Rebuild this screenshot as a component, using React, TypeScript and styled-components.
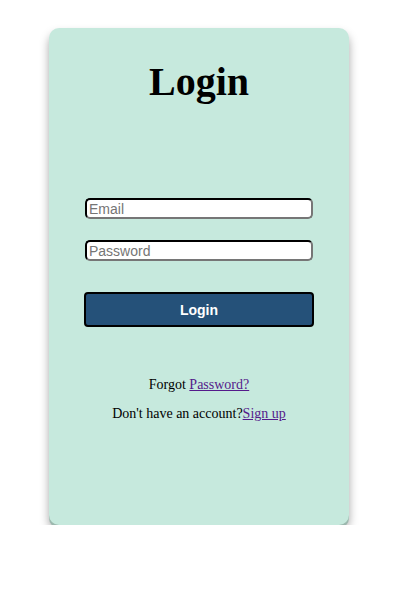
import {styled, createGlobalStyle} from "styled-components";

const GlobalStyle = createGlobalStyle`
    html, body {
        margin: 0;
        padding: 0;
        background: #ffffff;
    }
`

const Page = styled.div`
    padding: 28px 0 0 49px;
`

const Card = styled.div`
    box-sizing: border-box;
    width: 300px;
    height: 497px;
    background: #c6e9dd;
    border-radius: 10px;
    box-shadow: 0 3px 0 #9cb8ae, 0 6px 10px rgba(0, 0, 0, 0.35);
    padding-top: 31px;
    display: flex;
    flex-direction: column;
    align-items: center;
    font-family: "Liberation Serif", "Times New Roman", serif;
`

const Heading = styled.h1`
    margin: 0;
    font-size: 40px;
    line-height: 46px;
    font-weight: bold;
    color: #000;
`

const Form = styled.form`
    margin-top: 93px;
    display: flex;
    flex-direction: column;
    align-items: center;
`

const Input = styled.input<{ $gap?: number }>`
    box-sizing: border-box;
    width: 228px;
    height: 21px;
    margin-bottom: ${p => p.$gap ?? 0}px;
    padding: 0 2px;
    border: 2px inset #767676;
    border-top-color: #1a1a1a;
    border-left-color: #1a1a1a;
    border-radius: 5px;
    background: #fff;
    font-family: "Liberation Sans", Arial, sans-serif;
    font-size: 14px;
    outline: none;

    &::placeholder {
        color: #757575;
    }
`

const Button = styled.button`
    box-sizing: border-box;
    width: 230px;
    height: 35px;
    background: #255179;
    border: 2px solid #000;
    border-radius: 4px;
    color: #fff;
    font-family: "Liberation Sans", Arial, sans-serif;
    font-size: 14px;
    font-weight: bold;
`

const Links = styled.div`
    margin-top: 50px;
    display: flex;
    flex-direction: column;
    align-items: center;
    gap: 13px;
    font-size: 14px;
    line-height: 16px;
    color: #000;
`

const Link = styled.a`
    color: #551a8b;
    text-decoration: underline;
`

export default function App() {
    return (
        <>
            <GlobalStyle/>
            <Page>
                <Card>
                    <Heading>Login</Heading>
                    <Form onSubmit={e => e.preventDefault()}>
                        <Input type="email" placeholder="Email" $gap={21}/>
                        <Input type="password" placeholder="Password" $gap={31}/>
                        <Button type="submit">Login</Button>
                    </Form>
                    <Links>
                        <span>Forgot <Link href="#">Password?</Link></span>
                        <span>Don't have an account?<Link href="#">Sign up</Link></span>
                    </Links>
                </Card>
            </Page>
        </>
    )
}
